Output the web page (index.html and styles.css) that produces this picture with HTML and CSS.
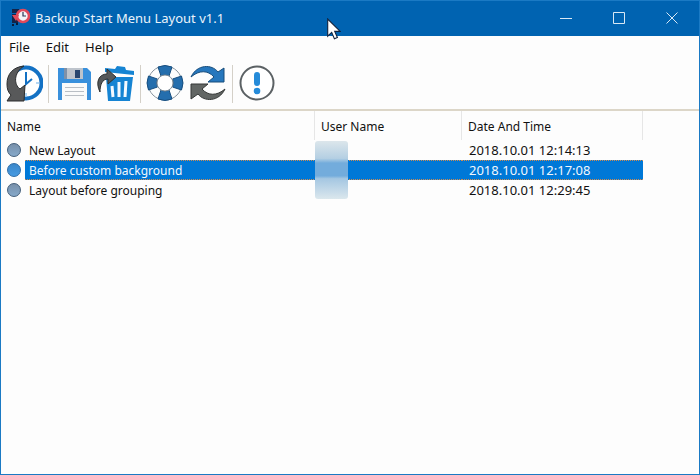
FILE: index.html
```html
<!DOCTYPE html>
<html lang="en">
<head>
<meta charset="utf-8">
<title>Backup Start Menu Layout v1.1</title>
<link rel="stylesheet" href="styles.css">
</head>
<body>
<div class="window">
  <header class="titlebar">
    <svg class="app-icon" viewBox="0 0 20 20" aria-hidden="true">
      <path d="M1 1h7v4H1zM1 6h6v9H1z" fill="#132449"/>
      <path d="M1 16h2v2H1zM5 15h2v2H5z" fill="#071a38"/>
      <circle cx="12" cy="8" r="6" fill="#f2f3f7" stroke="#e1495a" stroke-width="2.600"/>
      <path d="M1 7h7l-3 6z" fill="#e1495a"/>
      <path d="M12 4v4h3" fill="none" stroke="#2b3856" stroke-width="1.200"/>
    </svg>
    <h1 class="title">Backup Start Menu Layout v1.1</h1>
    <div class="controls">
      <button class="control" aria-label="Minimize"><svg viewBox="0 0 12 12"><path d="M0 6.500h12"/></svg></button>
      <button class="control" aria-label="Maximize"><svg viewBox="0 0 12 12"><path d="M.5.5h11v11H.5z"/></svg></button>
      <button class="control" aria-label="Close"><svg viewBox="0 0 12 12"><path d="M.5.5l11 11M11.500.5l-11 11"/></svg></button>
    </div>
    <svg class="pointer" viewBox="0 0 14 22" aria-hidden="true"><path d="M.7 1v17.200l4-3.800 2.700 6.300 3-1.200-2.700-6.100h5.500z" fill="#fff" stroke="#10213d" stroke-width="1.100"/></svg>
  </header>
  <nav class="menubar">
    <button class="menu">File</button>
    <button class="menu">Edit</button>
    <button class="menu">Help</button>
  </nav>
  <div class="toolbar" role="toolbar">
    <button class="tool" aria-label="Restore layout">
      <svg viewBox="0 0 38 38">
        <circle cx="21" cy="18" r="15.500" fill="#fff" stroke="#1371c4" stroke-width="4"/>
        <path d="M21 7v12l6-5" fill="none" stroke="#1371c4" stroke-width="2"/>
        <path d="M21 28v4M31 18h3" stroke="#9cc9ef" stroke-width="1.500"/>
        <path d="M19 1C8 2 2 9 2 19c0 5 1 8 4 11l-4 6h17l1-16-5 4C9 20 8 8 19 1z" fill="#58595a" stroke="#2b2d2e"/>
      </svg>
    </button>
    <span class="divider"></span>
    <button class="tool" aria-label="Save layout">
      <svg viewBox="0 0 38 38">
        <path d="M4 3h29l4 4v28H4z" fill="#3990dc"/>
        <path d="M10 3h19v11H10z" fill="#7f91a8"/>
        <path d="M13 3h16v11H13z" fill="#bec4cc"/>
        <path d="M21 5h5v8h-5z" fill="#29466e"/>
        <path d="M8 18h25v17H8z" fill="#fafafa"/>
        <path d="M11 22.500h19M11 26.500h19M11 30.500h19" stroke="#b9bec4"/>
      </svg>
    </button>
    <button class="tool" aria-label="Delete layout">
      <svg viewBox="0 0 38 38">
        <path d="M8 3l10 1 2-3 8 1 1 3 8 1v4L8 7zM9 12h27l-3 24H11z" fill="#1684d3"/>
        <path d="M15 21l1 11M22 17v15M29 16l-1 16" stroke="#f5faff" stroke-width="3"/>
        <path d="M3 27C-2 17 2 9 10 9V4l9 8-8 7v-5c-6 0-8 6-8 13z" fill="#55585a" stroke="#2d3031"/>
      </svg>
    </button>
    <span class="divider"></span>
    <button class="tool" aria-label="Help">
      <svg viewBox="0 0 38 38">
        <circle cx="19" cy="18" r="12" fill="none" stroke="#fcfdfd" stroke-width="11"/>
        <circle cx="19" cy="18" r="17" fill="none" stroke="#88949e"/>
        <g fill="#246ead" stroke="#184f80">
          <path d="M12 2q7-3 14 0l-3 9q-4-2-8 0z"/>
          <path d="M12 34q7 3 14 0l-3-9q-4 2-8 0z"/>
          <path d="M2.500 11q-3 7 0 14l9-3q-2-4 0-8z"/>
          <path d="M35.500 11q3 7 0 14l-9-3q2-4 0-8z"/>
        </g>
        <circle cx="19" cy="18" r="8" fill="#fff" stroke="#7d8b96"/>
      </svg>
    </button>
    <button class="tool" aria-label="Refresh">
      <svg viewBox="0 0 38 38">
        <path d="M2 12C8-1 23-1 29 7l6-4v14H19l6-5C19 5 10 5 2 12z" fill="#2677bd" stroke="#174c7a"/>
        <path d="M36 24C30 37 15 37 9 29l-7 5V19h17l-6 5c6 7 15 7 23 0z" fill="#626664" stroke="#343736"/>
      </svg>
    </button>
    <span class="divider"></span>
    <button class="tool" aria-label="About">
      <svg viewBox="0 0 38 38">
        <circle cx="19" cy="18" r="16.500" fill="#fff" stroke="#5b6164" stroke-width="2"/>
        <rect x="16" y="7" width="6" height="14" rx="3" fill="#258bd9"/>
        <circle cx="19" cy="26" r="3.300" fill="#258bd9"/>
      </svg>
    </button>
  </div>
  <main class="content">
    <table class="list">
      <colgroup><col class="col-icon"><col class="col-name"><col class="col-user"><col class="col-date"></colgroup>
      <thead>
        <tr><th colspan="2" scope="col">Name</th><th scope="col">User Name</th><th scope="col">Date And Time</th></tr>
      </thead>
      <tbody>
        <tr><td class="mark"><span class="dot"></span></td><td>New Layout</td><td class="user"><span class="redacted"></span></td><td class="date">2018.10.01 12:14:13</td></tr>
        <tr class="selected"><td class="mark"><span class="dot"></span></td><td>Before custom background</td><td></td><td class="date">2018.10.01 12:17:08</td></tr>
        <tr><td class="mark"><span class="dot"></span></td><td>Layout before grouping</td><td></td><td class="date">2018.10.01 12:29:45</td></tr>
      </tbody>
    </table>
  </main>
</div>
</body>
</html>
```

FILE: styles.css
```css
* { box-sizing: border-box; }
body { margin: 0; background: #fdfdfd; color: #111; font-family: "Noto Sans", sans-serif; }
button { margin: 0; padding: 0; border: 0; background: none; color: inherit; font: inherit; }
svg { display: block; }

.window {
  display: flex;
  flex-direction: column;
  min-height: 100vh;
  border: 1px solid #1b7ac4;
  background: #fdfdfd;
}

.titlebar {
  position: relative;
  display: flex;
  align-items: center;
  height: 35px;
  padding: 0 1px 2px 10px;
  background: #0063b1;
  color: #eaf3fb;
}
.app-icon { width: 20px; height: 20px; }
.title { margin: 0 0 0 4px; font-size: 13px; font-weight: 400; line-height: 20px; }
.controls { display: flex; margin-left: auto; }
.control { display: grid; place-items: center; width: 53px; height: 33px; }
.control svg { width: 12px; height: 12px; fill: none; stroke: #d8e8f5; stroke-width: 1; }
.pointer { position: absolute; top: 17px; left: 326px; width: 14px; height: 22px; }

.menubar { display: flex; gap: 16px; height: 23px; padding-left: 8px; font-size: 13px; line-height: 23px; }

.toolbar {
  display: flex;
  align-items: center;
  gap: 5px;
  height: 52px;
  padding: 0 4px;
  border-bottom: 2px solid #dcd6c8;
}
.tool svg { width: 38px; height: 38px; }
.divider { width: 1px; height: 38px; background: #d4d0c8; }

.list { width: 642px; border-spacing: 0; table-layout: fixed; font-size: 12px; line-height: 18px; }
.col-icon { width: 24px; }
.col-name { width: 290px; }
.col-user { width: 147px; }
th { height: 29px; padding: 2px 6px 0; border-right: 1px solid #e6e6e6; font-weight: 400; text-align: left; }
td { height: 20px; padding: 1px 4px 0; white-space: nowrap; }
.date { padding: 0 0 0 7px; font-size: 13px; }
.mark { padding: 0 0 0 6px; }
.dot {
  display: block;
  width: 14px;
  height: 14px;
  border: 1px solid #435f7b;
  border-radius: 50%;
  background: linear-gradient(#7890aa, #86a9ca);
}
.selected td:not(.mark) {
  background-color: #0078d7;
  color: #f1f7fd;
  background-image: linear-gradient(90deg, #d08b50 50%, #0078d7 50%), linear-gradient(90deg, #d08b50 50%, #0078d7 50%);
  background-position: left top, left bottom;
  background-size: 2px 1px;
  background-repeat: repeat-x;
}
.selected .dot { border-color: #2c6ca7; background: linear-gradient(#3b87ca, #479be2); }
.user { position: relative; }
.redacted {
  position: absolute;
  z-index: 1;
  top: 1px;
  left: 0;
  width: 33px;
  height: 58px;
  border-radius: 3px;
  background: linear-gradient(#dce6eb, #b4cfe3 30%, #73acdc 38%, #73acdc 60%, #a5c7e2 65%, #dbe7ed);
}
```
